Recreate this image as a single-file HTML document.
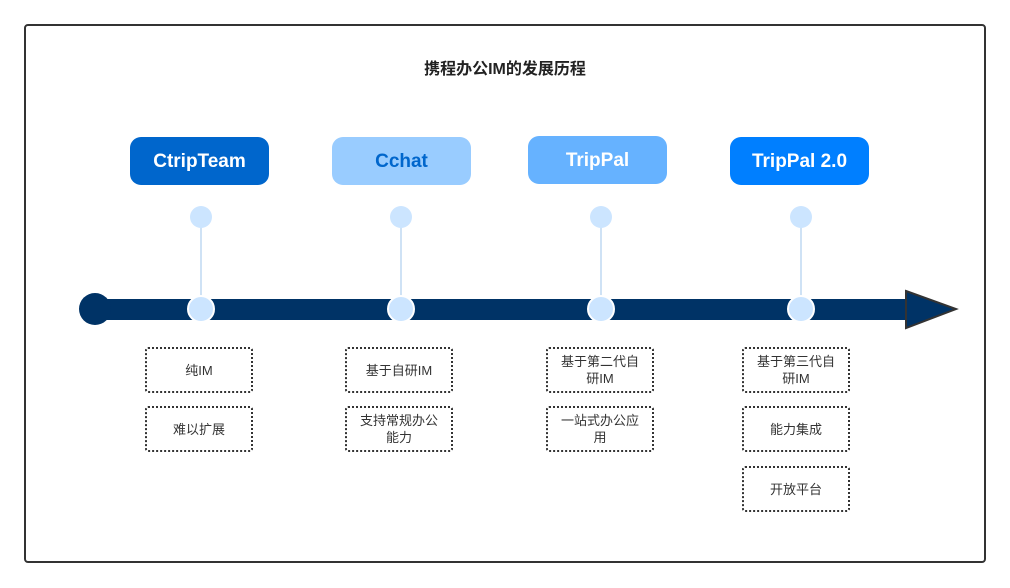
<!DOCTYPE html>
<html><head><meta charset="utf-8"><style>
body{margin:0;width:1010px;height:588px;background:#fff;position:relative;font-family:"Liberation Sans","Noto Sans CJK SC",sans-serif;overflow:hidden}
.a{position:absolute}
.frame{left:24px;top:24px;width:958px;height:535px;border:2px solid #333;border-radius:4px}
.title{left:0;width:1010px;top:55px;text-align:center;font-weight:bold;font-size:16px;color:#222}
.btn{height:48px;width:139px;border-radius:11px;display:flex;align-items:center;justify-content:center;font-weight:bold;font-size:19px;padding-top:2px;box-sizing:border-box}
.dot{width:22px;height:22px;border-radius:50%;background:#cce5ff}
.ln{width:1.5px;background:#cfe2f5}
.bd{width:24px;height:24px;border-radius:50%;background:#cce5ff;border:2px solid #fff}
.box{width:108px;height:46px;border:2px dotted #333;border-radius:3px;display:flex;align-items:center;justify-content:center;text-align:center;font-size:13px;color:#333;line-height:17px;padding:0 10px;box-sizing:border-box}
</style></head><body>
<div class="a frame"></div>
<div class="a title">携程办公IM的发展历程</div>
<div class="a btn" style="left:130px;top:137px;background:#0066cc;color:#fff">CtripTeam</div>
<div class="a btn" style="left:332px;top:137px;background:#99ccff;color:#0066cc">Cchat</div>
<div class="a btn" style="left:528px;top:136px;background:#66b2ff;color:#fff">TripPal</div>
<div class="a btn" style="left:730px;top:137px;background:#007fff;color:#fff">TripPal 2.0</div>
<div class="a" style="left:95px;top:299px;width:815px;height:21px;background:#003366"></div>
<div class="a" style="left:79px;top:293px;width:32px;height:32px;border-radius:50%;background:#003366"></div>
<svg class="a" style="left:900px;top:288px" width="60" height="44"><polygon points="6,3 56,21 6,40" fill="#003366" stroke="#333" stroke-width="2"/></svg>
<div class="a ln" style="left:200px;top:220px;height:80px"></div>
<div class="a ln" style="left:400px;top:220px;height:80px"></div>
<div class="a ln" style="left:600px;top:220px;height:80px"></div>
<div class="a ln" style="left:800px;top:220px;height:80px"></div>
<div class="a dot" style="left:190px;top:206px"></div>
<div class="a dot" style="left:390px;top:206px"></div>
<div class="a dot" style="left:590px;top:206px"></div>
<div class="a dot" style="left:790px;top:206px"></div>
<div class="a bd" style="left:187px;top:295px"></div>
<div class="a bd" style="left:387px;top:295px"></div>
<div class="a bd" style="left:587px;top:295px"></div>
<div class="a bd" style="left:787px;top:295px"></div>
<div class="a box" style="left:145px;top:347px">纯IM</div>
<div class="a box" style="left:145px;top:406px">难以扩展</div>
<div class="a box" style="left:345px;top:347px">基于自研IM</div>
<div class="a box" style="left:345px;top:406px">支持常规办公能力</div>
<div class="a box" style="left:546px;top:347px">基于第二代自研IM</div>
<div class="a box" style="left:546px;top:406px">一站式办公应用</div>
<div class="a box" style="left:742px;top:347px">基于第三代自研IM</div>
<div class="a box" style="left:742px;top:406px">能力集成</div>
<div class="a box" style="left:742px;top:466px">开放平台</div>
</body></html>
